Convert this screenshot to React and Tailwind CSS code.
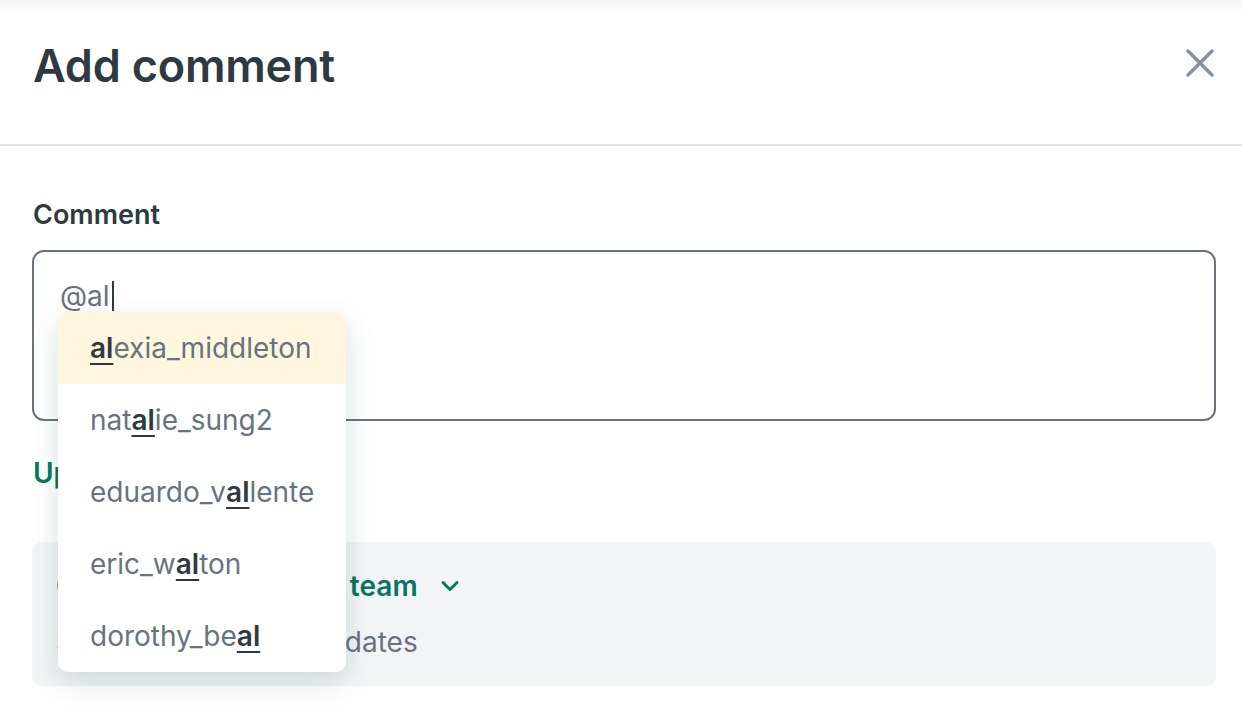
import React from "react";

const users = [
  ["", "al", "exia_middleton"],
  ["nat", "al", "ie_sung2"],
  ["eduardo_v", "al", "lente"],
  ["eric_w", "al", "ton"],
  ["dorothy_be", "al", ""],
];

function CloseIcon() {
  return (
    <svg width="28" height="28" viewBox="0 0 28 28" fill="none">
      <path
        d="M2 2L26 26M26 2L2 26"
        stroke="#87929d"
        strokeWidth="3.4"
        strokeLinecap="round"
      />
    </svg>
  );
}

function Chevron() {
  return (
    <svg width="20" height="14" viewBox="0 0 20 14" fill="none">
      <path
        d="M3 3.5L10 10.5L17 3.5"
        stroke="#07755f"
        strokeWidth="3"
        strokeLinecap="round"
        strokeLinejoin="round"
      />
    </svg>
  );
}

export default function App() {
  return (
    <div
      className="relative min-h-[706px] w-full bg-white text-[#2f3941]"
      style={{ fontFamily: "Inter, 'Noto Sans', sans-serif" }}
    >
      <div className="pointer-events-none absolute inset-x-0 top-0 h-[12px] bg-gradient-to-b from-[#f2f3f4] to-white/0" />

      <header className="flex h-[146px] items-start justify-between border-b-2 border-[#e3e6e9] pl-[33px] pr-[28px]">
        <h1 className="pt-[38px] text-[45px] font-semibold leading-[56px] tracking-[-0.2px]">
          Add comment
        </h1>
        <button className="mt-[49px]">
          <CloseIcon />
        </button>
      </header>

      <main className="pl-8 pr-[26px] pt-[49px]">
        <label className="block pl-px text-[27px] font-semibold leading-[40px]">
          Comment
        </label>

        <div className="relative mt-[15px]">
          <div className="h-[171px] rounded-[12px] border-2 border-[#68737d] px-[26px] pt-[24px]">
            <div className="flex items-center text-[28px] leading-[40px] text-[#68737d]">
              @al
              <span className="ml-[2px] inline-block h-[30px] w-[2px] bg-[#2f3941]" />
            </div>
          </div>

          <ul className="absolute left-[26px] top-[62px] w-[288px] overflow-hidden rounded-[10px] bg-white shadow-[0_10px_28px_rgba(4,68,77,0.16)]">
            {users.map(([pre, hit, post], i) => (
              <li
                key={i}
                className={`flex h-[72px] items-center pl-[32px] text-[28px] text-[#68737d] ${
                  i === 0 ? "bg-[#fff6df] text-[#2f3941]" : ""
                }`}
              >
                {pre}
                <span className="font-semibold text-[#2f3941] underline decoration-2 underline-offset-[5px]">
                  {hit}
                </span>
                {post}
              </li>
            ))}
          </ul>
        </div>

        <a className="mt-[32px] block pl-px text-[28px] font-semibold leading-[40px] text-[#07755f]">
          Upload attachments
        </a>

        <div className="mt-[49px] rounded-[10px] bg-[#f3f4f6] px-6 py-6">
          <div className="flex items-center gap-[22px] text-[28px] font-semibold leading-[40px] text-[#07755f]">
            <span>
              <span className="tracking-[-0.3px]">Cc: Customer service</span> team
            </span>
            <Chevron />
          </div>
          <div className="mt-4 text-[28px] leading-[40px] text-[#68737d]">
            Subscribe to ticket updates
          </div>
        </div>
      </main>
    </div>
  );
}
